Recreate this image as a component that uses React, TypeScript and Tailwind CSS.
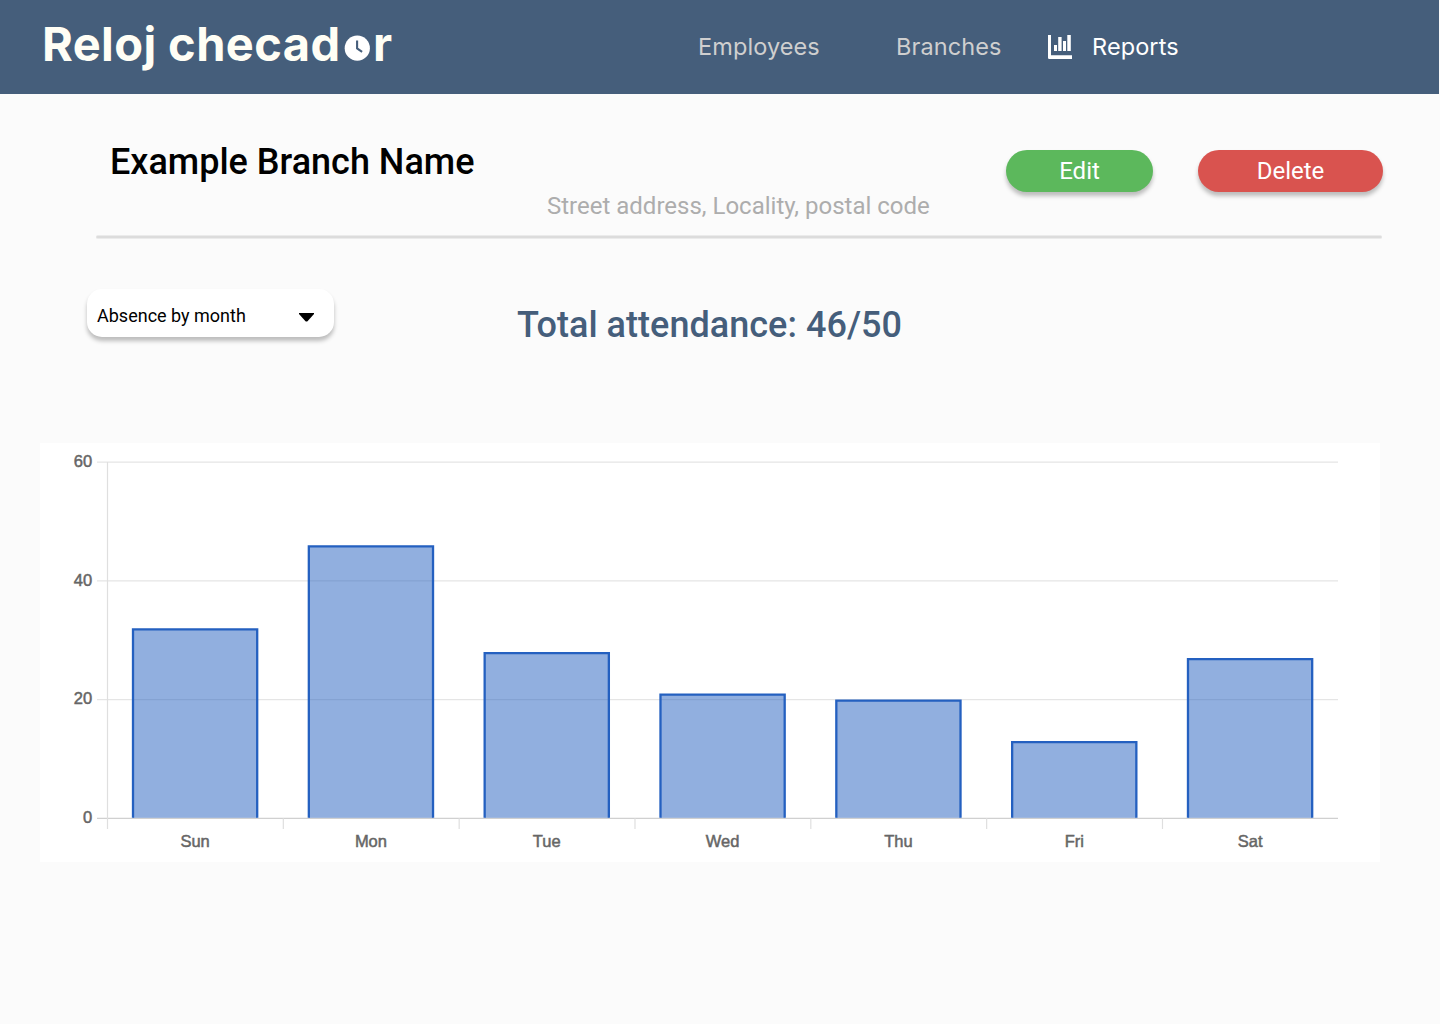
import React from "react";

const days = [
  { label: "Sun", value: 32 },
  { label: "Mon", value: 46 },
  { label: "Tue", value: 28 },
  { label: "Wed", value: 21 },
  { label: "Thu", value: 20 },
  { label: "Fri", value: 13 },
  { label: "Sat", value: 27 },
];

const STEP = 175.83;
const LEFT = 67.5;
const BASE = 375.3;
const UNIT = 5.935;

function ClockIcon() {
  return (
    <svg viewBox="0 0 26 26" className="mt-[35px] ml-[3px] size-[26px] shrink-0">
      <circle cx="13.3" cy="13.2" r="12.6" fill="#fff" />
      <path d="M13.1 5.6v7.9l5 3.3" fill="none" stroke="#455e7b" strokeWidth="2.1" />
    </svg>
  );
}

function ReportIcon() {
  return (
    <svg viewBox="0 0 24 24" className="size-6 shrink-0" fill="#fff">
      <path d="M0 0h3v20.2h21V24H1.2A1.2 1.2 0 0 1 0 22.8z" />
      <path d="M6 10h3v6H6zM10.2 2h3.4v14h-3.4zM15 6h3v10h-3zM19.3 0h3.5v16h-3.5z" />
    </svg>
  );
}

function Header() {
  return (
    <header className="flex h-[94px] w-[1439px] bg-[#455e7b]">
      <div className="flex w-[698px] pl-[42px] text-[#fffef5]">
        <span className="w-[299px] text-[47px] leading-[88px] font-bold tracking-[0.4px] whitespace-nowrap font-['Inter',sans-serif]">
          Reloj checad
        </span>
        <ClockIcon />
        <span className="ml-[3px] text-[47px] leading-[88px] font-bold font-['Inter',sans-serif]">r</span>
      </div>
      <nav className="flex h-[94px] items-center text-[23.5px] tracking-[0.1px] font-['Inter',sans-serif]">
        <a className="w-[198px] text-[#cfcfcf]">Employees</a>
        <a className="w-[152px] text-[#cfcfcf]">Branches</a>
        <ReportIcon />
        <a className="ml-5 text-white">Reports</a>
      </nav>
    </header>
  );
}

function Chart() {
  return (
    <svg
      viewBox="0 0 1340 419"
      className="mt-[106px] ml-10 block h-[419px] w-[1340px] bg-white font-['Liberation_Sans',Arial,sans-serif]"
    >
      {[0, 20, 40, 60].map((v) => {
        const y = BASE - v * UNIT;
        return (
          <g key={v}>
            <line x1="57" x2="1298" y1={y} y2={y} stroke={v === 0 ? "#d0d0d0" : "#e5e5e5"} strokeWidth="1.3" />
            <text x="52.2" y={y + 4.8} textAnchor="end" fontSize="16.5" fill="#666" stroke="#666" strokeWidth="0.5">
              {v}
            </text>
          </g>
        );
      })}
      <line x1={LEFT} x2={LEFT} y1="19" y2="386" stroke="#dfdfdf" strokeWidth="1.2" />
      {days.map((d, i) => {
        const x = LEFT + i * STEP + 25.5;
        const top = BASE - d.value * UNIT + 1;
        return (
          <g key={d.label}>
            {i > 0 && (
              <line x1={LEFT + i * STEP} x2={LEFT + i * STEP} y1={BASE} y2="386" stroke="#dfdfdf" strokeWidth="1.2" />
            )}
            <rect x={x} y={top} width="124.2" height={BASE - 0.5 - top} fill="#2460c0" fillOpacity="0.5" />
            <path
              d={`M${x} ${BASE - 0.5}V${top}H${x + 124.2}V${BASE - 0.5}`}
              fill="none"
              stroke="#2460c0"
              strokeWidth="2.3"
            />
            <text
              x={LEFT + (i + 0.5) * STEP - 0.3}
              y="404.3"
              textAnchor="middle"
              fontSize="16.5"
              fill="#666"
              stroke="#666"
              strokeWidth="0.5"
            >
              {d.label}
            </text>
          </g>
        );
      })}
    </svg>
  );
}

export default function App() {
  return (
    <div className="h-[1024px] w-[1440px] overflow-hidden bg-[#fbfbfb] font-['Roboto',sans-serif]">
      <Header />
      <section className="ml-24 flex h-[141px] w-[1288px] items-start">
        <h1 className="mt-[47px] ml-[14px] w-[437px] text-[36px] leading-[42px] font-medium text-black">
          Example Branch Name
        </h1>
        <p className="mt-[98px] w-[459px] text-[24px] leading-7 text-[#adadad]">
          Street address, Locality, postal code
        </p>
        <button className="mt-14 h-[42px] w-[147px] rounded-full bg-[#5cb85c] text-[24px] leading-[42px] text-white shadow-[0_4px_4px_rgba(0,0,0,0.25)]">
          Edit
        </button>
        <button className="mt-14 ml-[45px] h-[42px] w-[185px] shrink-0 rounded-full bg-[#d9534f] text-[24px] leading-[42px] text-white shadow-[0_4px_4px_rgba(0,0,0,0.25)]">
          Delete
        </button>
      </section>
      <div className="ml-24 h-1 w-[1286px] rounded-full border-y border-[#ebebeb] bg-[#dcdcdc]" />
      <section className="flex h-[98px] items-start pt-[50px] pl-[87px]">
        <button className="flex h-12 w-[247px] items-center rounded-[15px] bg-white pt-[5px] pl-[10px] text-[18px] text-black shadow-[0_4px_4px_rgba(0,0,0,0.25)]">
          <span className="w-[202px] text-left">Absence by month</span>
          <svg viewBox="0 0 15 9" className="mt-[3px] h-[9px] w-[15px]">
            <path d="M0 0h15v1L8.5 8.2q-1 .8-2 0L0 1z" />
          </svg>
        </button>
        <h2 className="mt-[15px] ml-[183px] text-[36px] leading-[42px] font-medium tracking-[0.03px] text-[#455e7b]">
          Total attendance: 46/50
        </h2>
      </section>
      <Chart />
    </div>
  );
}
